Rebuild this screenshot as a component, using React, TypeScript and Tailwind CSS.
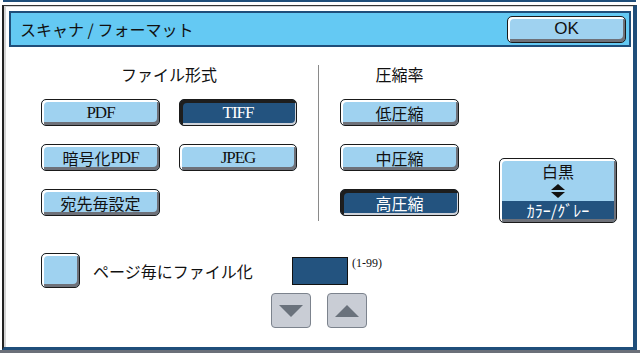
import clsx from 'clsx';

const jp = "font-['Noto_Sans_CJK_JP',sans-serif]";

function Latin({ children }: { children: React.ReactNode }) {
  return (
    <span className="font-['Liberation_Serif',serif] text-[17px] tracking-[-1px]">
      {children}
    </span>
  );
}

function Btn({
  children,
  selected = false,
  className,
}: {
  children: React.ReactNode;
  selected?: boolean;
  className?: string;
}) {
  return (
    <div
      className={clsx(
        'flex h-[27px] items-center justify-center rounded-[5px] border border-[#1a1a1a] text-[16px] leading-none',
        jp,
        selected
          ? 'bg-[#23537f] text-white shadow-[inset_3px_3px_0_#1e1e1e,inset_-1px_-2px_0_#cfd3da]'
          : 'bg-[#9fd2f0] text-[#111] shadow-[inset_2px_2px_0_#fff,inset_-2px_-3px_0_#6e7179]',
        className,
      )}
    >
      {children}
    </div>
  );
}

function ArrowBtn({ up = false }: { up?: boolean }) {
  return (
    <div className="flex h-[35px] w-[40px] items-center justify-center rounded-[4px] border border-[#7c838d] bg-[#c9cdd5]">
      <svg width="24" height="12" viewBox="0 0 24 12">
        <polygon points={up ? '12,0 24,12 0,12' : '0,0 24,0 12,12'} fill="#6a727c" />
      </svg>
    </div>
  );
}

export default function App() {
  return (
    <div className="flex h-[353px] w-[640px] flex-col overflow-hidden bg-white">
      <div className="ml-[3px] mr-[4px] h-[2px] bg-[#1f4e7a]" />
      <div className="h-[3px]" />
      <div className="ml-[2px] mr-[3px] flex flex-1 flex-col border-t border-l-2 border-r-4 border-b-[3px] border-t-[#333] border-l-[#222] border-r-[#1f4e7a] border-b-[#1f4e7a]">
        <div className="flex flex-1 flex-col border-t border-l-2 border-t-[#d4d4d4] border-l-[#d4d4d4] pl-[3px] pr-[2px] pt-[4px]">
          {/* title bar */}
          <div className="flex h-[36px] items-center justify-between border-2 border-[#1f4e7a] bg-[#64c9f3] pl-[9px] pr-[3px]">
            <span className={clsx(jp, 'text-[16px] text-[#111]')}>スキャナ / フォーマット</span>
            <div className="flex h-[27px] w-[119px] items-center justify-center rounded-[5px] border border-[#1a1a1a] bg-[#9fd2f0] font-['Liberation_Sans',sans-serif] text-[17px] text-[#111] shadow-[inset_2px_2px_0_#fff,inset_-2px_-3px_0_#6e7179]">
              OK
            </div>
          </div>

          {/* body */}
          <div className="pl-[32px] pt-[17px]">
            <div className="flex items-start">
              <div className="flex w-[256px] flex-col">
                <div className={clsx(jp, 'mb-[15px] h-[20px] text-center text-[16px] leading-[20px] text-[#111]')}>
                  ファイル形式
                </div>
                <div className="grid grid-cols-[119px_118px] gap-x-[19px] gap-y-[18px]">
                  <Btn><Latin>PDF</Latin></Btn>
                  <Btn selected><Latin>TIFF</Latin></Btn>
                  <Btn>暗号化<Latin>PDF</Latin></Btn>
                  <Btn><Latin>JPEG</Latin></Btn>
                  <Btn>宛先毎設定</Btn>
                </div>
              </div>

              <div className="ml-[21px] mt-[1px] h-[156px] w-px bg-[#8a8a8a]" />

              <div className="ml-[21px] flex w-[119px] flex-col">
                <div className={clsx(jp, 'mb-[15px] h-[20px] text-center text-[16px] leading-[20px] text-[#111]')}>
                  圧縮率
                </div>
                <div className="flex flex-col gap-[18px]">
                  <Btn>低圧縮</Btn>
                  <Btn>中圧縮</Btn>
                  <Btn selected>高圧縮</Btn>
                </div>
              </div>

              <div className="ml-[40px] mt-[94px] flex h-[65px] w-[118px] flex-col rounded-[5px] border border-[#1a1a1a] bg-[#9fd2f0] px-[2px] pb-[3px] pt-[3px] shadow-[inset_2px_2px_0_#fff,inset_-2px_-3px_0_#6e7179]">
                <div className={clsx(jp, 'text-center text-[16px] leading-[18px] text-[#111]')}>白黒</div>
                <div className="mt-[4px] flex flex-col items-center gap-[2px]">
                  <svg width="14" height="6" viewBox="0 0 14 6">
                    <polygon points="7,0 14,6 0,6" fill="#111" />
                  </svg>
                  <svg width="14" height="6" viewBox="0 0 14 6">
                    <polygon points="0,0 14,0 7,6" fill="#111" />
                  </svg>
                </div>
                <div className={clsx(jp, 'mt-[3px] flex h-[18px] items-center justify-center bg-[#23537f] text-[16px] leading-none text-white')}>
                  ｶﾗｰ/ｸﾞﾚｰ
                </div>
              </div>
            </div>

            {/* page-per-file row */}
            <div className="mt-[30px] flex items-start">
              <div className="h-[35px] w-[39px] rounded-[5px] border border-[#1a1a1a] bg-[#9fd2f0] shadow-[inset_2px_2px_0_#fff,inset_-2px_-3px_0_#6e7179]" />
              <div className={clsx(jp, 'ml-[13px] flex h-[35px] w-[178px] items-center text-[16px] text-[#111]')}>
                ページ毎にファイル化
              </div>
              <div className="flex flex-col">
                <div className="flex items-start">
                  <div className="ml-[21px] mt-[4px] h-[28px] w-[56px] border border-[#111] bg-[#23537f]" />
                  <span className="ml-[4px] mt-[1px] font-['Liberation_Serif',serif] text-[12px] text-[#111]">(1-99)</span>
                </div>
                <div className="mt-[8px] flex gap-[16px]">
                  <ArrowBtn />
                  <ArrowBtn up />
                </div>
              </div>
            </div>
          </div>
        </div>
      </div>
      <div className="h-[3px] bg-[#6b7079]" />
    </div>
  );
}
